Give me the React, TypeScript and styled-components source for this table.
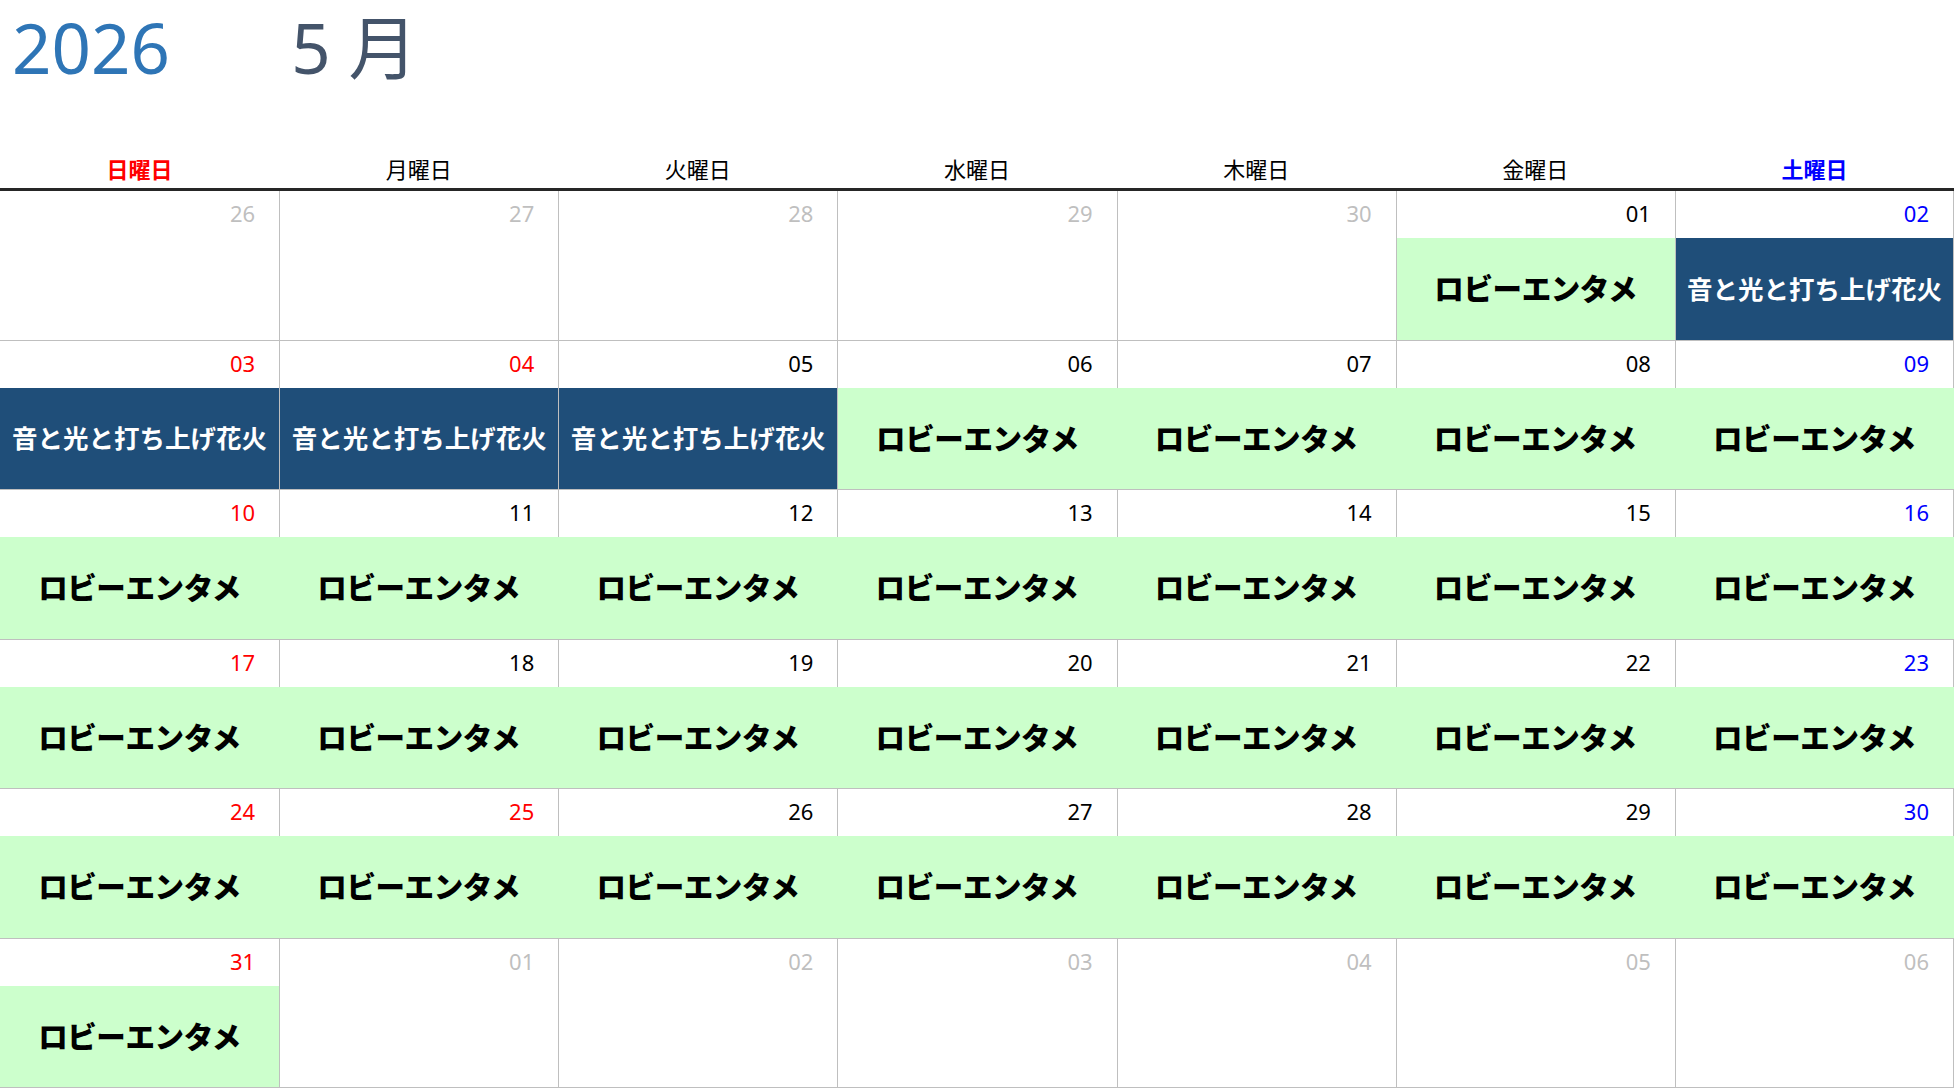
import React from "react";
import styled, { createGlobalStyle, css } from "styled-components";

const GlobalStyle = createGlobalStyle`
  html, body {
    margin: 0;
    padding: 0;
    background: #ffffff;
  }
  body {
    font-family: "Noto Sans", "Noto Sans CJK JP", sans-serif;
  }
`;

type Tone = "muted" | "sun" | "sat" | "plain";
type EventKind = "lobby" | "fireworks" | null;

interface Day {
  label: string;
  tone: Tone;
  event: EventKind;
}

const GRID_LINE = "#bfbfbf";

const toneColor: Record<Tone, string> = {
  muted: "#bfbfbf",
  sun: "#ff0000",
  sat: "#0000ff",
  plain: "#000000",
};

const Page = styled.div`
  width: 1954px;
  background: #ffffff;
`;

const TitleRow = styled.div`
  display: grid;
  grid-template-columns: repeat(7, 1fr);
  height: 150px;
  box-sizing: border-box;
  padding-top: 13px;
`;

const TitleText = styled.div<{ $color: string }>`
  font-family: "Noto Sans", "Noto Sans CJK JP", sans-serif;
  font-size: 69px;
  line-height: 69px;
  color: ${(p) => p.$color};
  padding-left: 12px;
  white-space: nowrap;
`;

const WeekHeader = styled.div`
  display: grid;
  grid-template-columns: repeat(7, 1fr);
  border-bottom: 3px solid #262626;
`;

const WeekdayCell = styled.div<{ $tone: Tone }>`
  font-family: "Noto Sans CJK JP", sans-serif;
  font-size: 22px;
  line-height: 22px;
  padding: 7px 0 9px;
  text-align: center;
  color: ${(p) => toneColor[p.$tone]};
  font-weight: ${(p) => (p.$tone === "plain" ? 400 : 700)};
`;

const MonthGrid = styled.div`
  display: grid;
  grid-template-columns: repeat(7, 1fr);
  grid-auto-rows: 149.5px;
`;

const DayCell = styled.div`
  display: flex;
  flex-direction: column;
  box-sizing: border-box;
  border-bottom: 1px solid ${GRID_LINE};
  min-width: 0;
`;

const DateLabel = styled.div<{ $tone: Tone; $divider: boolean; $edge: boolean }>`
  height: 47px;
  flex: none;
  box-sizing: border-box;
  padding-right: 24px;
  text-align: right;
  font-family: "Noto Sans", sans-serif;
  font-size: 22px;
  line-height: 44px;
  color: ${(p) => toneColor[p.$tone]};
  border-left: ${(p) => (p.$divider ? `1px solid ${GRID_LINE}` : "none")};
  border-right: ${(p) => (p.$edge ? `1px solid ${GRID_LINE}` : "none")};
`;

const Band = styled.div<{ $kind: EventKind; $divider: boolean; $edge: boolean }>`
  flex: 1;
  display: flex;
  align-items: center;
  justify-content: center;
  box-sizing: border-box;
  padding-bottom: 3px;
  font-family: "Noto Sans CJK JP", sans-serif;
  white-space: nowrap;
  overflow: hidden;
  border-left: ${(p) => (p.$divider ? `1px solid ${GRID_LINE}` : "none")};
  border-right: ${(p) => (p.$edge ? `1px solid ${GRID_LINE}` : "none")};
  ${(p) =>
    p.$kind === "lobby" &&
    css`
      background: #ccffcc;
      color: #000000;
      font-size: 29.5px;
      font-weight: 900;
      letter-spacing: -0.4px;
    `}
  ${(p) =>
    p.$kind === "fireworks" &&
    css`
      background: #1f4e79;
      color: #ffffff;
      font-size: 25.5px;
      font-weight: 700;
    `}
`;

const eventText: Record<"lobby" | "fireworks", string> = {
  lobby: "ロビーエンタメ",
  fireworks: "音と光と打ち上げ花火",
};

const weekdays: { name: string; tone: Tone }[] = [
  { name: "日曜日", tone: "sun" },
  { name: "月曜日", tone: "plain" },
  { name: "火曜日", tone: "plain" },
  { name: "水曜日", tone: "plain" },
  { name: "木曜日", tone: "plain" },
  { name: "金曜日", tone: "plain" },
  { name: "土曜日", tone: "sat" },
];

const pad = (n: number) => String(n).padStart(2, "0");

const buildDays = (): Day[] => {
  const days: Day[] = [];
  [26, 27, 28, 29, 30].forEach((d) =>
    days.push({ label: pad(d), tone: "muted", event: null })
  );
  const redDays = new Set([3, 4, 10, 17, 24, 25, 31]);
  const fireworks = new Set([2, 3, 4, 5]);
  for (let d = 1; d <= 31; d++) {
    const col = (d + 4) % 7;
    let tone: Tone = "plain";
    if (redDays.has(d)) tone = "sun";
    else if (col === 6) tone = "sat";
    days.push({
      label: pad(d),
      tone,
      event: fireworks.has(d) ? "fireworks" : "lobby",
    });
  }
  [1, 2, 3, 4, 5, 6].forEach((d) =>
    days.push({ label: pad(d), tone: "muted", event: null })
  );
  return days;
};

const days = buildDays();

export default function App() {
  return (
    <Page>
      <GlobalStyle />
      <TitleRow>
        <TitleText $color="#2e75b6">2026</TitleText>
        <TitleText $color="#44546a">5 月</TitleText>
      </TitleRow>
      <WeekHeader>
        {weekdays.map((w) => (
          <WeekdayCell key={w.name} $tone={w.tone}>
            {w.name}
          </WeekdayCell>
        ))}
      </WeekHeader>
      <MonthGrid>
        {days.map((day, i) => {
          const col = i % 7;
          const left = col > 0 ? days[i - 1] : null;
          const isLast = col === 6;
          const bandDivider =
            left !== null && !(day.event === "lobby" && left.event === "lobby");
          return (
            <DayCell key={i}>
              <DateLabel $tone={day.tone} $divider={col > 0} $edge={isLast}>
                {day.label}
              </DateLabel>
              <Band
                $kind={day.event}
                $divider={bandDivider}
                $edge={isLast && day.event !== "lobby"}
              >
                {day.event ? eventText[day.event] : null}
              </Band>
            </DayCell>
          );
        })}
      </MonthGrid>
    </Page>
  );
}
